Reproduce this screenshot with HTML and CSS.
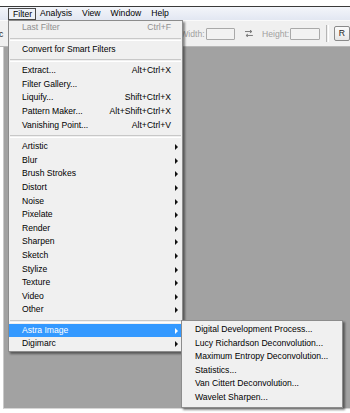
FILE: index.html
```html
<!DOCTYPE html>
<html>
<head>
<meta charset="utf-8">
<title>Filter menu</title>
<link rel="stylesheet" href="styles.css">
</head>
<body>
<div class="screen">
  <div class="topgap"></div>
  <div class="menubar">
    <span class="mb-item open">Filter</span>
    <span class="mb-item">Analysis</span>
    <span class="mb-item">View</span>
    <span class="mb-item">Window</span>
    <span class="mb-item">Help</span>
  </div>
  <div class="optbar">
    <span class="opt-cut">c</span>
    <span class="opt-label first">Width:</span>
    <span class="opt-input"></span>
    <svg class="swap" width="8" height="7" viewBox="0 0 8 7">
      <path d="M0 1.5h7M5 0l2 1.5-2 1.5M8 5.5h-7M3 4l-2 1.5 2 1.5" stroke="#7a7a7a" stroke-width="1" fill="none"/>
    </svg>
    <span class="opt-label">Height:</span>
    <span class="opt-input narrow"></span>
    <span class="opt-sep"></span>
    <span class="opt-btn">R</span>
  </div>
  <div class="canvas"></div>

  <div class="menu">
    <div class="item disabled"><span>Last Filter</span><span>Ctrl+F</span></div>
    <div class="sep"></div>
    <div class="item"><span>Convert for Smart Filters</span></div>
    <div class="sep"></div>
    <div class="item"><span>Extract...</span><span>Alt+Ctrl+X</span></div>
    <div class="item"><span>Filter Gallery...</span></div>
    <div class="item"><span>Liquify...</span><span>Shift+Ctrl+X</span></div>
    <div class="item"><span>Pattern Maker...</span><span>Alt+Shift+Ctrl+X</span></div>
    <div class="item"><span>Vanishing Point...</span><span>Alt+Ctrl+V</span></div>
    <div class="sep"></div>
    <div class="item sub"><span>Artistic</span></div>
    <div class="item sub"><span>Blur</span></div>
    <div class="item sub"><span>Brush Strokes</span></div>
    <div class="item sub"><span>Distort</span></div>
    <div class="item sub"><span>Noise</span></div>
    <div class="item sub"><span>Pixelate</span></div>
    <div class="item sub"><span>Render</span></div>
    <div class="item sub"><span>Sharpen</span></div>
    <div class="item sub"><span>Sketch</span></div>
    <div class="item sub"><span>Stylize</span></div>
    <div class="item sub"><span>Texture</span></div>
    <div class="item sub"><span>Video</span></div>
    <div class="item sub"><span>Other</span></div>
    <div class="sep short"></div>
    <div class="item sub active"><span>Astra Image</span></div>
    <div class="item sub"><span>Digimarc</span></div>
  </div>

  <div class="submenu">
    <div class="item"><span>Digital Development Process...</span></div>
    <div class="item"><span>Lucy Richardson Deconvolution...</span></div>
    <div class="item"><span>Maximum Entropy Deconvolution...</span></div>
    <div class="item"><span>Statistics...</span></div>
    <div class="item"><span>Van Cittert Deconvolution...</span></div>
    <div class="item"><span>Wavelet Sharpen...</span></div>
  </div>
</div>
</body>
</html>
```

FILE: styles.css
```css
body{
margin: 0;
background-color: #ffffff;
font-family: "Liberation Sans", Arial, sans-serif;
font-size: 8.6px;
color: #000000;
}
.screen{
position: relative;
width: 350px;
height: 413px;
overflow: hidden;
display: flex;
flex-direction: column;
}
.topgap{
height: 6px;
flex: none;
}
.menubar{
flex: none;
height: 13px;
border-top: 1px solid #3a3a3a;
background: linear-gradient(#f3f5fa, #e2e7f2);
display: flex;
align-items: center;
padding-left: 8px;
}
.mb-item{
box-sizing: border-box;
height: 12px;
line-height: 10px;
padding: 0 4px;
margin-right: 2px;
}
.mb-item.open{
border: 1px solid #4a4a4a;
background-color: #eef1f8;
padding: 0 3px 0 4px;
margin-right: 0;
}
.optbar{
flex: none;
height: 25px;
background-color: #f0f0f0;
border-top: 1px solid #fafafa;
border-bottom: 1px solid #b8b8b8;
display: flex;
align-items: center;
color: #a0a0a0;
}
.opt-cut{
color: #222;
margin-left: -1px;
width: 184px;
}
.opt-label{
margin-right: 1px;
}
.opt-input{
box-sizing: border-box;
width: 30px;
height: 12px;
border: 1px solid #a9a9a9;
background-color: #f2f2f2;
border-radius: 1px;
}
.swap{
margin: 0 9px 0 10px;
}
.opt-sep{
width: 1px;
height: 17px;
border-left: 1px solid #b5b5b5;
border-right: 1px solid #ffffff;
margin: 0 5px 0 6px;
}
.opt-btn{
box-sizing: border-box;
height: 15px;
padding: 0 4px;
border: 1px solid #8a8a8a;
border-radius: 2px;
background: linear-gradient(#fbfbfb, #e6e6e6);
color: #222;
line-height: 13px;
}
.canvas{
flex: 1;
background-color: #a2a2a2;
border-left: 1px solid #c9c9c9;
margin-left: 3px;
margin-bottom: 4px;
border-bottom: 1px solid #d6d6d6;
}
.menu{
position: absolute;
left: 8px;
top: 20px;
box-sizing: border-box;
width: 175px;
background-color: #f0f0f0;
border: 1px solid #8c8c8c;
box-shadow: 2px 2px 2px rgba(0,0,0,0.45);
}
.item{
position: relative;
height: 13.6px;
line-height: 13.6px;
padding: 0 11px 0 13px;
display: flex;
justify-content: space-between;
white-space: nowrap;
}
.item.disabled{
color: #8f8f8f;
}
.item.sub::after{
content: "";
position: absolute;
right: 4px;
top: 4px;
border-left: 3px solid #111;
border-top: 3px solid transparent;
border-bottom: 3px solid transparent;
}
.item.active{
background-color: #3399ff;
color: #ffffff;
}
.item.active::after{
border-left-color: #ffffff;
}
.sep{
height: 8px;
position: relative;
}
.sep::before{
content: "";
position: absolute;
left: 1px;
right: 1px;
top: 3px;
height: 1px;
border-top: 1px solid #c8c8c8;
border-bottom: 1px solid #ffffff;
}
.sep.short{
height: 7px;
}
.submenu{
position: absolute;
left: 181px;
top: 320px;
box-sizing: border-box;
width: 162px;
padding: 2px 0;
background-color: #f0f0f0;
border: 1px solid #8c8c8c;
box-shadow: 2px 2px 2px rgba(0,0,0,0.45);
}
```
